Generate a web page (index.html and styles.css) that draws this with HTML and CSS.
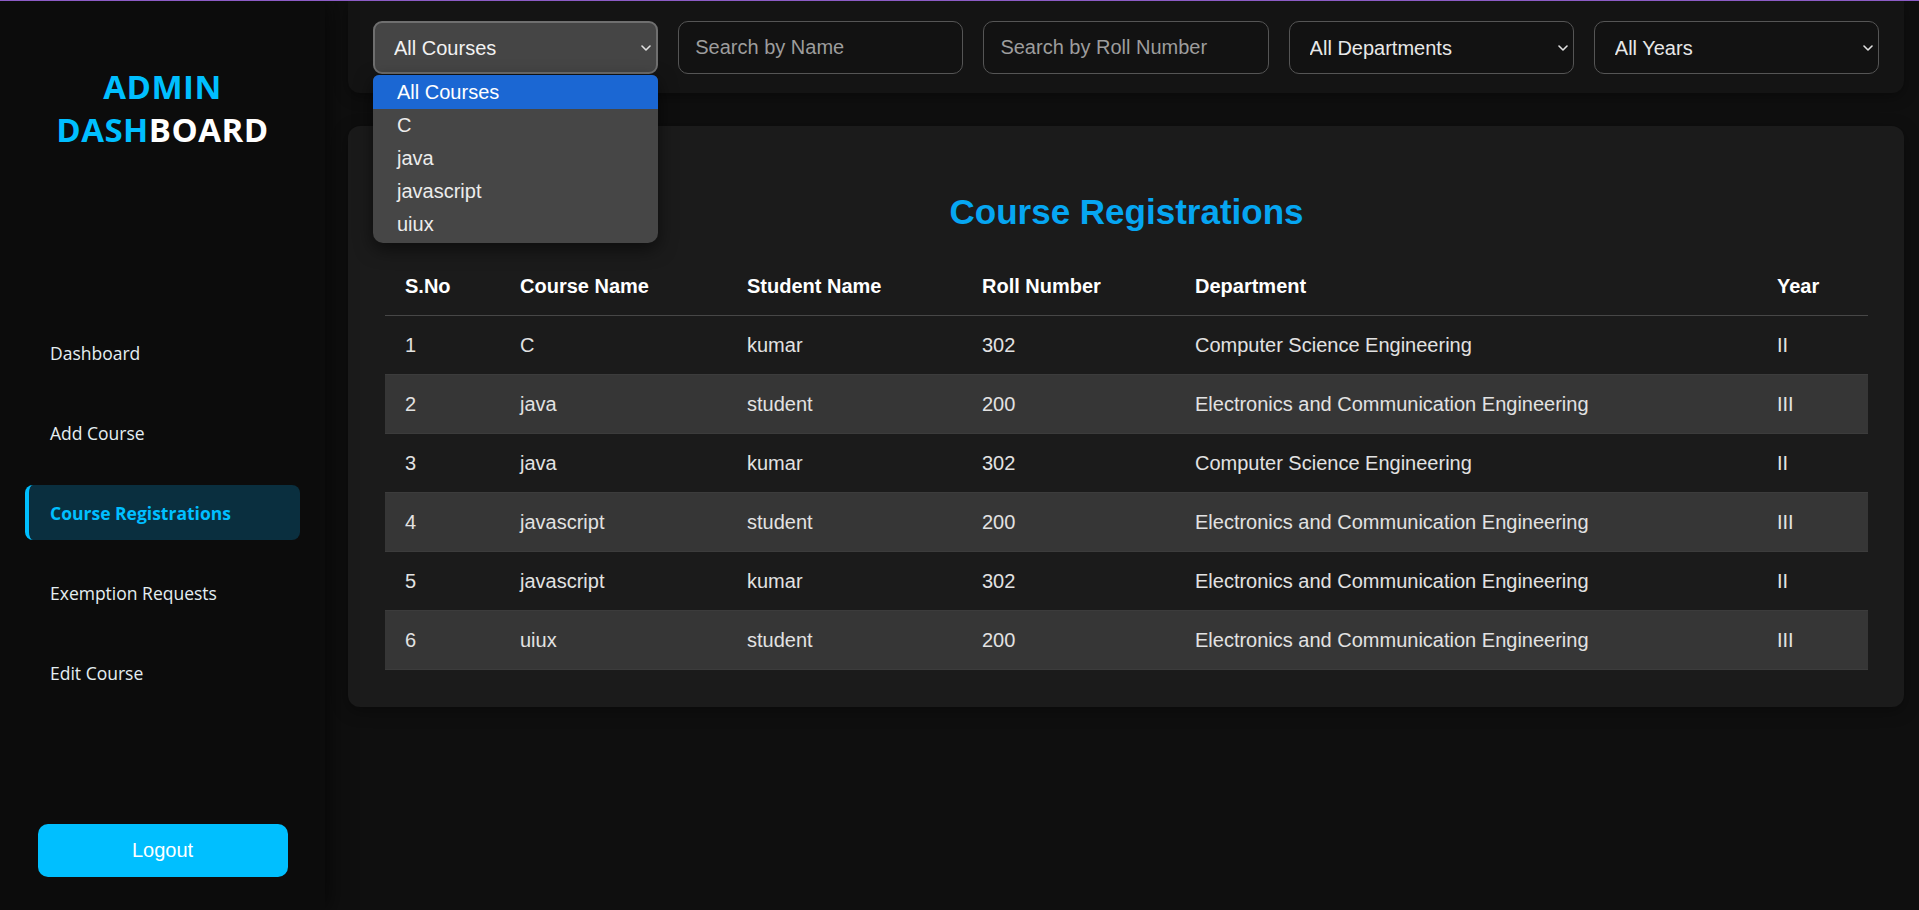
FILE: index.html
```html
<!DOCTYPE html>
<html lang="en">
<head>
<meta charset="utf-8">
<title>Admin Dashboard - Course Registrations</title>
<link rel="stylesheet" href="styles.css">
</head>
<body>
  <aside class="sidebar">
    <div class="logo">
      <div class="logo-line accent">ADMIN</div>
      <div class="logo-line"><span class="accent">DASH</span>BOARD</div>
    </div>
    <nav class="nav">
      <a class="nav-item">Dashboard</a>
      <a class="nav-item">Add Course</a>
      <a class="nav-item active">Course Registrations</a>
      <a class="nav-item">Exemption Requests</a>
      <a class="nav-item">Edit Course</a>
    </nav>
    <button class="logout">Logout</button>
  </aside>

  <main class="main">
    <div class="filters">
      <div class="field">
        <select class="control select focused">
          <option>All Courses</option>
          <option>C</option>
          <option>java</option>
          <option>javascript</option>
          <option>uiux</option>
        </select>
        <ul class="dropdown">
          <li class="option selected">All Courses</li>
          <li class="option">C</li>
          <li class="option">java</li>
          <li class="option">javascript</li>
          <li class="option">uiux</li>
        </ul>
      </div>
      <div class="field">
        <input class="control input" type="text" placeholder="Search by Name">
      </div>
      <div class="field">
        <input class="control input" type="text" placeholder="Search by Roll Number">
      </div>
      <div class="field">
        <select class="control select">
          <option>All Departments</option>
        </select>
      </div>
      <div class="field">
        <select class="control select">
          <option>All Years</option>
        </select>
      </div>
    </div>

    <section class="card">
      <h2 class="title">Course Registrations</h2>
      <table class="table">
        <thead>
          <tr>
            <th class="c-sno">S.No</th>
            <th class="c-course">Course Name</th>
            <th class="c-student">Student Name</th>
            <th class="c-roll">Roll Number</th>
            <th class="c-dept">Department</th>
            <th class="c-year">Year</th>
          </tr>
        </thead>
        <tbody>
          <tr><td>1</td><td>C</td><td>kumar</td><td>302</td><td>Computer Science Engineering</td><td>II</td></tr>
          <tr><td>2</td><td>java</td><td>student</td><td>200</td><td>Electronics and Communication Engineering</td><td>III</td></tr>
          <tr><td>3</td><td>java</td><td>kumar</td><td>302</td><td>Computer Science Engineering</td><td>II</td></tr>
          <tr><td>4</td><td>javascript</td><td>student</td><td>200</td><td>Electronics and Communication Engineering</td><td>III</td></tr>
          <tr><td>5</td><td>javascript</td><td>kumar</td><td>302</td><td>Electronics and Communication Engineering</td><td>II</td></tr>
          <tr><td>6</td><td>uiux</td><td>student</td><td>200</td><td>Electronics and Communication Engineering</td><td>III</td></tr>
        </tbody>
      </table>
    </section>
  </main>
</body>
</html>
```

FILE: styles.css
```css
* {
  box-sizing: border-box;
}

html,
body {
  height: 100%;
}

body {
  margin: 0;
  background: #0f0f0f;
  border-top: 1px solid #8c5cc6;
  display: flex;
  overflow: hidden;
  font-family: "Liberation Sans", Arial, sans-serif;
  color: #e6e6e6;
}

/* ---------- Sidebar ---------- */
.sidebar {
  width: 325px;
  flex-shrink: 0;
  background: #0c0c0c;
  box-shadow: 2px 0 22px rgba(0, 0, 0, 0.65);
  position: relative;
  z-index: 2;
  display: flex;
  flex-direction: column;
  padding: 64px 25px 33px;
  font-family: "Segoe UI", "Open Sans", sans-serif;
}

.logo {
  text-align: center;
  font-weight: 700;
  font-size: 33px;
  line-height: 43px;
  color: #ffffff;
  letter-spacing: 0.5px;
}

.accent {
  color: #00bfff;
}

.nav {
  display: flex;
  flex-direction: column;
  gap: 25px;
  margin-top: 174px;
}

.nav-item {
  height: 55px;
  display: flex;
  align-items: center;
  padding-left: 21px;
  border-left: 4px solid transparent;
  border-radius: 8px;
  font-size: 17.5px;
  color: #e4eef2;
  cursor: pointer;
}

.nav-item.active {
  background: #0a2f3f;
  border-left-color: #00bfff;
  color: #00bfff;
  font-weight: 700;
}

.logout {
  margin-top: auto;
  align-self: center;
  width: 250px;
  height: 53px;
  border: none;
  border-radius: 10px;
  background: #00bfff;
  color: #ffffff;
  font-family: "Liberation Sans", Arial, sans-serif;
  font-size: 20px;
  cursor: pointer;
}

/* ---------- Main ---------- */
.main {
  flex: 1;
  padding: 0 15px 0 23px;
  position: relative;
  z-index: 1;
}

.filters {
  display: flex;
  gap: 20px;
  padding: 20px 25px 19px;
  background: #141414;
  border-radius: 0 0 12px 12px;
  box-shadow: 0 4px 14px rgba(0, 0, 0, 0.35);
  position: relative;
  z-index: 3;
}

.field {
  flex: 1 1 0;
  min-width: 0;
  position: relative;
  display: flex;
}

.control {
  flex: 1 1 0;
  width: 0;
  min-width: 0;
  height: 53px;
  border: 1px solid #555555;
  border-radius: 10px;
  background: #121212;
  color: #e8e8e8;
  font-family: "Liberation Sans", Arial, sans-serif;
  font-size: 20px;
  outline: none;
}

.input {
  padding: 0 16px;
}

.input::placeholder {
  color: #9d9d9d;
}

.select {
  appearance: none;
  -webkit-appearance: none;
  padding: 0 30px 0 20px;
  background-image: url("data:image/svg+xml;utf8,<svg xmlns='http://www.w3.org/2000/svg' width='10' height='6' viewBox='0 0 10 6'><path d='M1 1l4 4 4-4' fill='none' stroke='%23e0e0e0' stroke-width='1.6' stroke-linecap='round' stroke-linejoin='round'/></svg>");
  background-repeat: no-repeat;
  background-position: right 5px center;
  background-size: 10px 6px;
}

.select.focused {
  background-color: #454545;
  border: 2px solid #6f6f6f;
  border-radius: 9px;
  padding-left: 19px;
  color: #f2f2f2;
}

.dropdown {
  position: absolute;
  top: calc(100% + 1px);
  left: 0;
  right: 0;
  margin: 0;
  padding: 0 0 2px;
  list-style: none;
  background: #464646;
  border-radius: 6px 6px 10px 10px;
  overflow: hidden;
  box-shadow: 0 6px 18px rgba(0, 0, 0, 0.55);
}

.option {
  height: 33px;
  line-height: 33px;
  padding-left: 24px;
  font-size: 20px;
  color: #ececec;
}

.option.selected {
  height: 34px;
  line-height: 34px;
  background: #1b67d3;
  color: #ffffff;
}

/* ---------- Card / table ---------- */
.card {
  margin-top: 33px;
  background: #1b1b1b;
  border-radius: 12px;
  padding: 36px 36px 37px 37px;
  box-shadow: 0 4px 16px rgba(0, 0, 0, 0.35);
}

.title {
  margin: 30px 0 25px;
  text-align: center;
  font-size: 35px;
  font-weight: 700;
  color: #06a6f2;
}

.table {
  width: 100%;
  border-collapse: collapse;
  table-layout: fixed;
  font-size: 20px;
}

.table th,
.table td {
  text-align: left;
  padding: 18px 20px;
  line-height: 22px;
  white-space: nowrap;
}

.table th {
  color: #ffffff;
  font-weight: 700;
  border-bottom: 1px solid #474747;
}

.table td {
  color: #e2e2e2;
  border-bottom: 1px solid #3c3c3c;
}

.table tbody tr:nth-child(even) {
  background: #363636;
}

.c-sno { width: 115px; }
.c-course { width: 227px; }
.c-student { width: 235px; }
.c-roll { width: 213px; }
.c-dept { width: 582px; }
.c-year { width: 111px; }
```
